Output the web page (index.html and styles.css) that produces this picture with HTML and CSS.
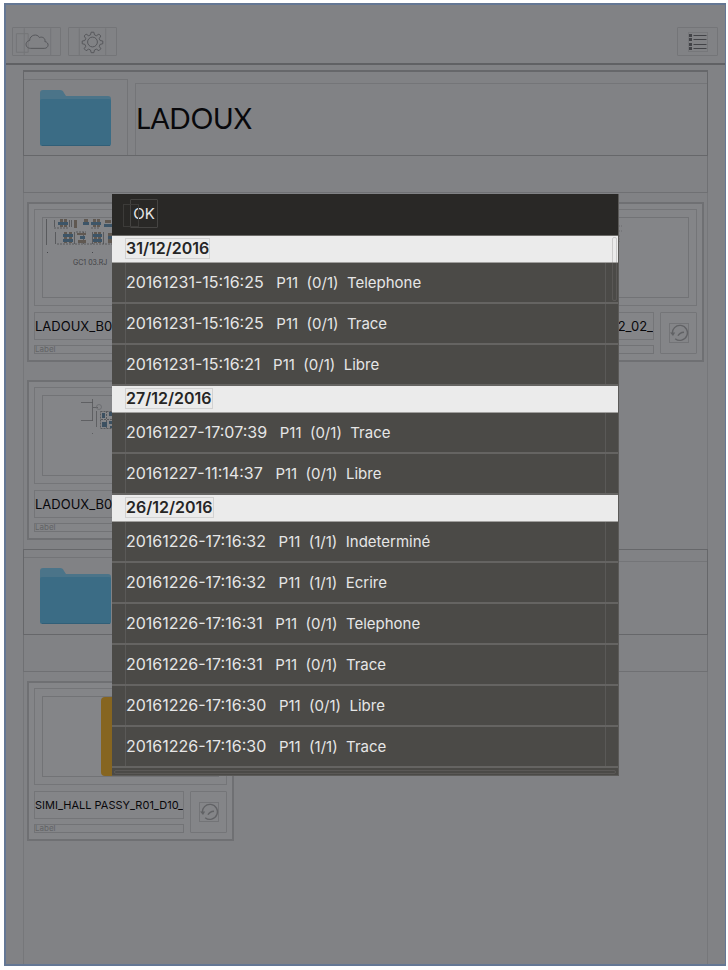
FILE: index.html
```html
<!DOCTYPE html>
<html lang="fr">
<head>
<meta charset="utf-8">
<meta name="viewport" content="width=device-width, initial-scale=1">
<title>LADOUX</title>
<link rel="stylesheet" href="styles.css">
</head>
<body>
<svg class="defs" aria-hidden="true">
  <symbol id="folder" viewBox="0 0 72 56">
    <path fill="#4b7489" d="M0 10V3q0-3 3-3h17q3 0 4 3l2 3h42q3 0 3 3v4H0z"/>
    <rect y="9" width="71" height="47" rx="2" fill="#3b6c85"/>
    <path d="M2 55.500h68" stroke="#315f78"/>
  </symbol>
  <symbol id="history" viewBox="0 0 20 20">
    <rect x=".5" y=".5" width="19" height="19" fill="none" stroke="#737477"/>
    <path d="M3.500 11a7.500 7.500 0 1 1 2.700 4.700M9 12.800q1.500-3.300 6-3.600" fill="none" stroke="#616265" stroke-width="1.400"/>
    <path d="M1 9.500h5.200l-2.200 3.500z" fill="#616265"/>
  </symbol>
</svg>
<div class="app">
  <header class="toolbar">
    <div class="tools">
      <button class="tool" type="button" aria-label="Nuage">
        <svg width="48" height="28" viewBox="0 0 48 28"><g fill="none" stroke="#747578"><path d="M11.500 0v28M38.500 0v28M3.500 5.500h12v19h-12z"/></g><path d="M18 20.500c-6 0-6-7.500-1-8 0-6 8-7.500 10-3 3-1.500 6.500 1 5.500 4 5 1 4 7-.5 7z" fill="none" stroke="#55565a"/></svg>
      </button>
      <button class="tool" type="button" aria-label="Réglages">
        <svg width="48" height="28" viewBox="0 0 48 28"><path d="M10.500 0v28M37.500 0v28" stroke="#747578"/><g fill="none" stroke="#55565a" stroke-linejoin="round"><circle cx="24" cy="14" r="5"/><path d="M22.600 4h2.800l.6 2.700 2 .9 2.500-1.700 2 2-1.600 2.600.9 2 2.700.5v2.800l-2.700.6-.9 2 1.600 2.500-2 2-2.500-1.600-2 .9-.6 2.700h-2.800l-.6-2.700-2-.9-2.500 1.600-2-2 1.600-2.500-.9-2-2.700-.6v-2.800l2.700-.5.9-2-1.600-2.600 2-2 2.500 1.700 2-.9z"/></g></svg>
      </button>
    </div>
    <button class="tool tool-list" type="button" aria-label="Liste">
      <svg width="20" height="20" viewBox="0 0 20 20"><rect x=".5" y=".5" width="19" height="19" fill="none" stroke="#76777a"/><path d="M5.500 3.500h13M5.500 7.500h13M5.500 12.500h13M5.500 16.500h13" stroke="#424347" stroke-width="1.200"/><path d="M1 2h3v3H1zM1 6h3v3H1zM1 11h3v3H1zM1 15h3v3H1z" fill="#424347"/></svg>
    </button>
  </header>

  <main class="content">
    <section>
      <div class="folder folder-main">
        <div class="folder-icon"><svg width="72" height="56"><use href="#folder"/></svg></div>
        <h1 class="folder-name">LADOUX</h1>
      </div>
      <div class="band"></div>
      <div class="cards">
        <article class="card">
          <div class="preview"><div class="thumb">
            <svg width="100" height="80" viewBox="0 0 100 80">
              <g opacity=".75">
                <g stroke="#3c3d40" fill="none" stroke-width=".8"><path d="M3.500 1v26M11.500 2v7M12.500 14v12M26.500 2v7M28.500 2v7M31.500 14v12M40.500 14v12M54.500 2v7M49.500 14v12M60.500 14v12"/><path d="M11 10h14M48 10h9M14 26h70M33 14h10" stroke-dasharray="2 1"/></g>
                <g fill="#55493f"><path d="M17 1h3v8h-3zM21 1h3v8h-3zM31 2h3v8h-3zM41 1h4v3h-4zM50 1h3v8h-3zM54 1h3v8h-3zM62 2h6v3h-6zM21 14h3v11h-3zM26 14h3v11h-3zM34 15h9v2h-9zM35 22h8v3h-8zM51 14h3v11h-3zM55 14h3v11h-3zM65 15h5v10h-5z"/></g>
                <g fill="#26465e"><path d="M15 4h10v3H15zM40 4h6v3h-6zM48 4h10v3H48zM61 6h8v3h-8zM20 16h10v3H20zM20 21h10v3H20zM37 18h5v3h-5zM50 16h9v3h-9zM50 21h9v3h-9zM65 18h5v3h-5z"/></g>
              </g>
              <path d="M4 34.500h1M49 34.500h1" stroke="#47484c"/>
              <text x="30" y="47" class="thumb-text">GC1 03.RJ</text>
            </svg>
          </div></div>
          <div class="caption"><h2 class="name">LADOUX_B0</h2><p class="label">Label</p></div>
          <button class="history" type="button" aria-label="Historique"><svg width="20" height="20"><use href="#history"/></svg></button>
        </article>
        <article class="card">
          <div class="preview"><div class="thumb"></div></div>
          <div class="caption"><h2 class="name"></h2><p class="label"></p></div>
          <button class="history" type="button" aria-label="Historique"><svg width="20" height="20"><use href="#history"/></svg></button>
        </article>
        <article class="card">
          <div class="preview"><div class="thumb">
            <svg class="thumb-right" width="100" height="80" viewBox="0 0 100 80"><path d="M30 8h4M30 13h4M31 17v7" stroke="#6a6b6e" stroke-dasharray="2 1"/></svg>
          </div></div>
          <div class="caption"><h2 class="name name-end">2_02_</h2><p class="label"></p></div>
          <button class="history" type="button" aria-label="Historique"><svg width="20" height="20"><use href="#history"/></svg></button>
        </article>
        <article class="card">
          <div class="preview"><div class="thumb">
            <svg width="100" height="80" viewBox="0 0 100 80">
              <g opacity=".75">
                <path d="M38 6.500h12M38 24.500h12M49.500 3v22M49.500 37v1M50 11.500h5M53.500 15v16" stroke="#46474a" fill="none" stroke-width=".8"/>
                <circle cx="56" cy="11" r="2.500" fill="none" stroke="#606164" stroke-width=".8"/>
                <path d="M57.500 15.500h12v17h-12zM63.500 15v18M58 23.500h12" fill="none" stroke="#4a4b4e" stroke-dasharray="2 1"/>
                <path d="M59 17h3v5h-3zM66 16h3v4h-3zM59 26h5v5h-5zM66 25h4v3h-4zM67 30h3v2h-3z" fill="#243f55"/>
              </g>
            </svg>
          </div></div>
          <div class="caption"><h2 class="name">LADOUX_B0</h2><p class="label">Label</p></div>
          <button class="history" type="button" aria-label="Historique"><svg width="20" height="20"><use href="#history"/></svg></button>
        </article>
      </div>
    </section>
    <section>
      <div class="folder">
        <div class="folder-icon"><svg width="72" height="56"><use href="#folder"/></svg></div>
        <div class="folder-name"></div>
      </div>
      <div class="band"></div>
      <div class="cards">
        <article class="card">
          <div class="preview"><div class="thumb thumb-center"><div class="sheet"></div></div></div>
          <div class="caption"><h2 class="name name-small">SIMI_HALL PASSY_R01_D10_</h2><p class="label">Label</p></div>
          <button class="history" type="button" aria-label="Historique"><svg width="20" height="20"><use href="#history"/></svg></button>
        </article>
      </div>
    </section>
  </main>

  <div class="modal" role="dialog" aria-label="Historique">
    <div class="modal-bar"><button class="ok" type="button">OK</button></div>
    <div class="log">
      <h3 class="day"><span>31/12/2016</span></h3>
      <ul class="entries">
        <li><time>20161231-15:16:25</time>   P11  (0/1)  Telephone</li>
        <li><time>20161231-15:16:25</time>   P11  (0/1)  Trace</li>
        <li><time>20161231-15:16:21</time>   P11  (0/1)  Libre</li>
      </ul>
      <h3 class="day"><span>27/12/2016</span></h3>
      <ul class="entries">
        <li><time>20161227-17:07:39</time>   P11  (0/1)  Trace</li>
        <li><time>20161227-11:14:37</time>   P11  (0/1)  Libre</li>
      </ul>
      <h3 class="day"><span>26/12/2016</span></h3>
      <ul class="entries">
        <li><time>20161226-17:16:32</time>   P11  (1/1)  Indeterminé</li>
        <li><time>20161226-17:16:32</time>   P11  (1/1)  Ecrire</li>
        <li><time>20161226-17:16:31</time>   P11  (0/1)  Telephone</li>
        <li><time>20161226-17:16:31</time>   P11  (0/1)  Trace</li>
        <li><time>20161226-17:16:30</time>   P11  (0/1)  Libre</li>
        <li><time>20161226-17:16:30</time>   P11  (1/1)  Trace</li>
      </ul>
    </div>
    <div class="bar-v"></div>
    <div class="bar-h"></div>
  </div>
</div>
</body>
</html>
```
FILE: styles.css
```css
* { box-sizing: border-box; }
body {
  margin: 0;
  padding: 3px 2px 4px 4px;
  background: #fff;
  font-family: Inter, "Liberation Sans", sans-serif;
  color: #08080b;
}
h1, h2, h3, p, ul { margin: 0; padding: 0; font-weight: 400; }
ul { list-style: none; }
button { font: inherit; color: inherit; background: none; padding: 0; margin: 0; border: 1px solid #747578; border-radius: 1px; }
svg { display: block; }
.defs { position: absolute; width: 0; height: 0; }

.app {
  position: relative;
  display: flex;
  flex-direction: column;
  min-height: calc(100vh - 7px);
  background: #818285;
  border: 2px solid #647794;
  border-width: 2px 1px 2px 2px;
}

.toolbar {
  display: flex;
  justify-content: space-between;
  align-items: flex-end;
  height: 60px;
  padding: 0 7px 7px 6px;
  border-bottom: 2px solid #606164;
}
.tools { display: flex; gap: 7px; }
.tool { display: flex; align-items: center; justify-content: center; width: 49px; height: 29px; overflow: hidden; }
.tool-list { width: 41px; }

.content {
  flex: 1;
  margin: 5px 17px 0;
  border: solid #76777a;
  border-width: 0 1px;
}
.folder {
  display: flex;
  gap: 7px;
  height: 86px;
  margin: 0 -1px;
  border: 1px solid #66676a;
}
.folder-main { border-top-width: 2px; }
.folder-icon {
  display: flex;
  align-items: center;
  justify-content: center;
  width: 104px;
  margin-top: 7px;
  border: 1px solid #737477;
  border-width: 1px 1px 0 0;
}
.folder-name {
  flex: 1;
  display: flex;
  align-items: center;
  margin-top: 11px;
  padding-bottom: 4px;
  border: 1px solid #747578;
  border-width: 1px 0 0 1px;
  font: 28px/36px Lato, sans-serif;
}
.band { height: 37px; margin: 0 -1px; border: 1px solid #6f7073; border-top: 0; }

.cards {
  display: grid;
  grid-template-columns: repeat(3, 207px);
  justify-content: space-between;
  gap: 18px;
  padding: 9px 3px;
}
.card {
  display: grid;
  grid-template: 97px 42px / 1fr 37px;
  gap: 6px;
  height: 160px;
  padding: 5px;
  border: 2px solid #6f7073;
  background: #848588;
}
.preview { grid-column: 1 / 3; padding: 7px; border: 1px solid #747578; }
.thumb { height: 81px; border: 1px solid #727376; overflow: hidden; }
.thumb-center { display: flex; justify-content: center; }
.thumb-right { margin-left: 75px; }
.sheet { width: 60px; background: #866520; border-radius: 4px; }
.thumb-text { font: 7px Inter, sans-serif; fill: #3f4044; }
.caption { display: flex; flex-direction: column; justify-content: space-between; min-width: 0; }
.name {
  height: 28px;
  border: 1px solid #747578;
  font-size: 13px;
  line-height: 27px;
  white-space: nowrap;
  overflow: hidden;
}
.name-end { text-align: right; }
.name-small { font-size: 11px; }
.label { height: 9px; border: 1px solid #727376; font-size: 8px; line-height: 7px; color: #626366; }
.history { display: flex; align-items: center; justify-content: center; }

.modal {
  position: absolute;
  inset: 0;
  margin: auto;
  display: flex;
  flex-direction: column;
  width: calc(100% - 24px);
  max-width: 507px;
  height: calc(100% - 24px);
  max-height: 582px;
  overflow: hidden;
  background: #4b4a47;
  border: 1px solid #5b5a58;
  border-width: 0 1px 1px 0;
  color: #e6e6e6;
}
.modal-bar { position: relative; flex: none; display: flex; align-items: center; height: 42px; padding: 0 0 2px 18px; background: #292826; border-bottom: 1px solid #6c6b68; }
.modal-bar::before { content: ""; position: absolute; left: 11px; top: 10px; width: 14px; height: 21px; border: 1px solid #3c3b39; }
.ok { width: 28px; height: 29px; border-color: #454442; font-size: 15px; }
.log { flex: 1; overflow: hidden; }
.day {
  height: 27px;
  padding: 2px 13px;
  background: #ebebeb;
  border-bottom: 1px solid #a09f9d;
  color: #252525;
  font-size: 16px;
  line-height: 19px;
  font-weight: 600;
}
.day span { display: inline-block; border: 1px solid #d2d2d2; }
.entries li {
  height: 41px;
  padding: 0 14px;
  border-bottom: 2px solid #656462;
  font-size: 15px;
  line-height: 39px;
  white-space: pre;
  background: linear-gradient(#5a5957, #5a5957) 13px 0 / 1px 100% no-repeat, linear-gradient(#5a5957, #5a5957) right 12px top 0 / 1px 100% no-repeat;
}
.entries time { font-size: 16px; }
.bar-v, .bar-h { position: absolute; border: 1px solid rgba(125, 124, 122, .3); border-radius: 2px; }
.bar-v { top: 43px; right: 1px; width: 5px; height: 64px; }
.bar-h { left: 2px; right: 2px; bottom: 1px; height: 4px; }
```
